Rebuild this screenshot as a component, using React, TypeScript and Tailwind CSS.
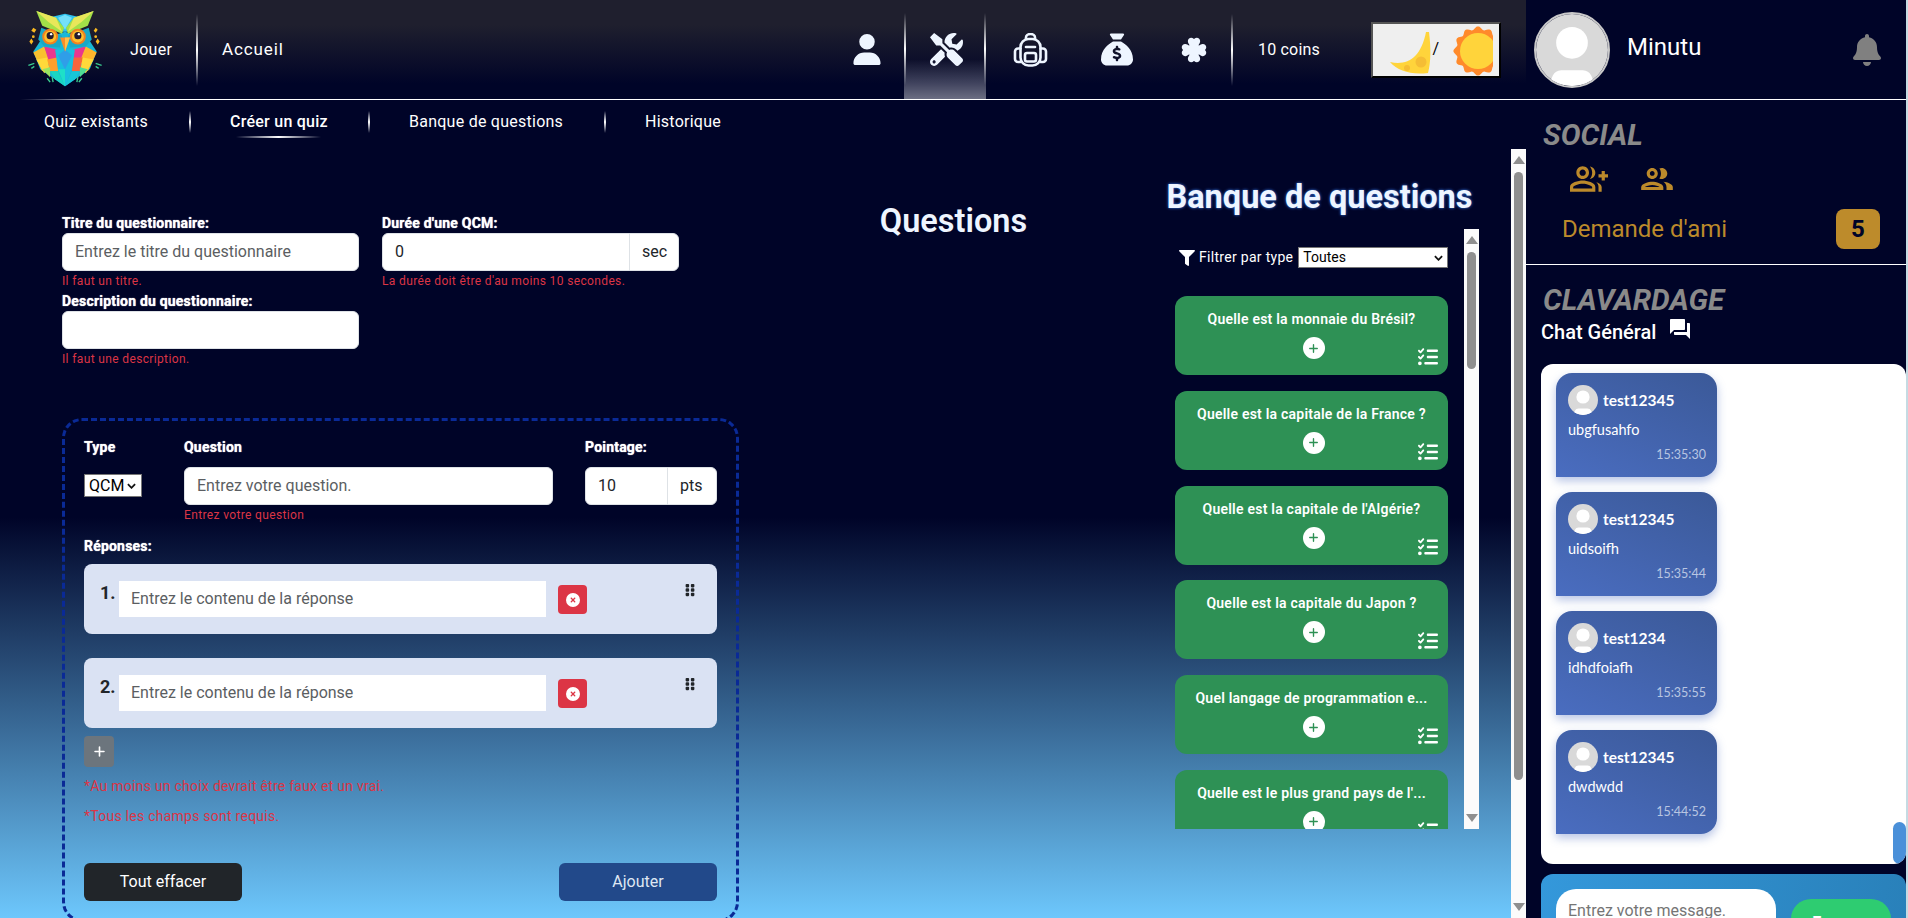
import React from "react";
import { FaTools, FaBell, FaFilter, FaGripVertical } from "react-icons/fa";
import { FaListCheck, FaSackDollar, FaCircleXmark, FaPlus, FaUser, FaClover } from "react-icons/fa6";
import { MdForum, MdOutlineGroupAdd, MdOutlineGroup } from "react-icons/md";

function Owl() {
  return (
    <svg viewBox="0 0 130 100" className="w-[130px] h-[99px] shrink-0">
      <polygon points="41,40 33,52 40,70 65,87 90,70 97,52 89,40 65,32" fill="#18b8d8" />
      <polygon points="33,53 44,47 50,62 42,72" fill="#f9c22e" />
      <polygon points="44,47 57,50 56,60 49,63" fill="#e8378f" />
      <polygon points="36,60 44,74 49,68 47,58" fill="#ffd93a" />
      <polygon points="47,60 57,58 58,72 50,72" fill="#ff9f2b" />
      <polygon points="86,47 73,50 74,60 81,63" fill="#e8378f" />
      <polygon points="97,53 86,47 80,62 88,72" fill="#ffb62c" />
      <polygon points="83,58 73,58 72,72 80,72" fill="#f7643c" />
      <polygon points="94,60 86,74 81,68 83,58" fill="#ffd93a" />
      <polygon points="42,70 50,68 50,78" fill="#9be35f" />
      <polygon points="88,70 80,68 80,78" fill="#4fdc92" />
      <polygon points="50,72 58,72 65,87 55,80" fill="#1ad6c2" />
      <polygon points="80,72 72,72 65,87 75,80" fill="#17c7d8" />
      <polygon points="55,50 75,50 72,70 65,87 58,70" fill="#19bfe0" />
      <polygon points="58,56 65,50 72,56 65,70" fill="#2f9ee8" />
      <polygon points="58,70 65,70 65,87" fill="#1ee0c8" />
      <polygon points="52,17 65,14 78,17 70,32 60,32" fill="#2fc2ee" />
      <polygon points="58,18 65,15 72,18 65,30" fill="#74e0fb" />
      <polygon points="41,28 62,36 60,48 44,47 38,40" fill="#19a8c6" />
      <polygon points="89,28 68,36 70,48 86,47 92,40" fill="#19a8c6" />
      <polygon points="36,11 56,18 64,28 62,34 42,26" fill="#a3e048" />
      <polygon points="36,11 56,18 62,32 48,22" fill="#e8e75a" />
      <polygon points="94,11 74,18 66,28 68,34 88,26" fill="#a3e048" />
      <polygon points="94,11 74,18 68,32 82,22" fill="#e8e75a" />
      <circle cx="50" cy="37" r="8" fill="#f0811f" />
      <circle cx="50" cy="37" r="6" fill="#ffc02c" />
      <circle cx="50" cy="36" r="3.600" fill="#241a2e" />
      <circle cx="51" cy="34.500" r="1.200" fill="#fff" />
      <circle cx="78" cy="37" r="8" fill="#f0811f" />
      <circle cx="78" cy="37" r="6" fill="#ffc02c" />
      <circle cx="78" cy="36" r="3.600" fill="#241a2e" />
      <circle cx="79" cy="34.500" r="1.200" fill="#fff" />
      <polygon points="60,38 70,38 65,52" fill="#f98d2a" />
      <polygon points="65,38 70,38 65,52" fill="#ffc04a" />
      <g fill="#f8b820">
        <polygon points="33,28 36,30 34,33 31,31" />
        <circle cx="33" cy="37" r="1.400" />
        <polygon points="31,39 33,42 31,45 29,42" />
        <polygon points="96,28 98,30 96,33 94,31" />
        <circle cx="96" cy="37" r="1.400" />
        <polygon points="98,39 100,42 98,45 96,42" />
      </g>
      <g stroke="#39c98e" strokeWidth="1.400">
        <path d="M28 66l6-2M31 69l3-2M102 66l-6-2M99 69l-3-2M47 79l3 4M52 78l1 5M82 79l-3 4M78 78l-1 5" />
      </g>
    </svg>
  );
}

function Avatar({ size }: { size: string }) {
  return (
    <svg viewBox="0 0 100 100" className={size}>
      <defs>
        <clipPath id="avc">
          <circle cx="50" cy="50" r="50" />
        </clipPath>
      </defs>
      <g clipPath="url(#avc)">
        <rect width="100" height="100" fill="#d9d9d9" />
        <circle cx="50" cy="40" r="22" fill="#fff" />
        <path d="M20 100c0-10 4-22 15-22h30c11 0 15 12 15 22z" fill="#fff" />
      </g>
    </svg>
  );
}

function Backpack() {
  return (
    <svg viewBox="0 0 35 34" className="w-[35px] h-[34px]" fill="none" stroke="#eef5ff" strokeWidth="2.600" strokeLinecap="round" strokeLinejoin="round">
      <path d="M13 6V4.500a4.500 3.500 0 0 1 9 0V6" />
      <rect x="7.500" y="6" width="20" height="26.500" rx="8" />
      <path d="M7.500 15.500H5a3 3 0 0 0-3 3V26a3 3 0 0 0 3 3h2.500" />
      <path d="M27.500 15.500H30a3 3 0 0 1 3 3V26a3 3 0 0 1-3 3h-2.500" />
      <path d="M13 14h9" />
      <rect x="12" y="20" width="11" height="8.500" rx="2" />
    </svg>
  );
}

function ThemeArt() {
  const pts: string[] = [];
  for (let i = 0; i < 144; i++) {
    const t = (i / 144) * Math.PI * 2;
    const r = 23 + 1.6 * Math.cos(12 * t);
    pts.push(`${(105 + r * Math.cos(t)).toFixed(1)},${(27 + r * Math.sin(t)).toFixed(1)}`);
  }
  return (
    <svg viewBox="0 0 126 52" className="w-[126px] h-[52px]">
      <defs>
        <clipPath id="sunclip">
          <rect x="0" y="0" width="120" height="52" />
        </clipPath>
      </defs>
      <path d="M17 38C34 42 48 34 53 8L56 8C58 24 58 38 55 49C38 51 25 47 17 38z" fill="#ffd43b" />
      <circle cx="48" cy="38" r="5.500" fill="#f5bd35" />
      <circle cx="34" cy="44" r="3" fill="#f5bd35" />
      <text x="59.500" y="30" fontSize="16" fill="#000" fontFamily="Roboto, sans-serif">/</text>
      <g clipPath="url(#sunclip)">
        <polygon points={pts.join(" ")} fill="#ff8a2b" />
        <circle cx="105" cy="27" r="18" fill="#ffd43b" />
      </g>
    </svg>
  );
}

function VSep({ h = "h-[72px]" }: { h?: string }) {
  return <div className={`w-[2px] shrink-0 ${h} bg-[linear-gradient(180deg,transparent,#ffffff_50%,transparent)]`} />;
}

function Scrollbar({ thumb, className }: { thumb: string; className: string }) {
  return (
    <div className={`w-[15px] bg-[#fbfbfb] flex flex-col items-center shrink-0 ${className}`}>
      <svg viewBox="0 0 12 8" className="w-[12px] h-[8px] mt-[7px] shrink-0">
        <polygon points="6,0 12,8 0,8" fill="#8f8f8f" />
      </svg>
      <div className={`w-[9px] ${thumb} mt-[8px] rounded-[5px] bg-[#8f8f8f] shrink-0`} />
      <svg viewBox="0 0 12 8" className="w-[12px] h-[8px] mt-auto mb-[7px] shrink-0">
        <polygon points="0,0 12,0 6,8" fill="#8f8f8f" />
      </svg>
    </div>
  );
}

const label = "block text-white text-[14px] tracking-[0.2px] leading-[19px] font-bold whitespace-nowrap [text-shadow:0_0_1px_#ffffff]";
const control =
  "h-[38px] bg-white border border-[#dee2e6] text-[16px] flex items-center px-[12px] whitespace-nowrap";
const value = "text-[#212529]";
const ph = "text-[#5b5e62]";
const err = "text-[#dc3545] text-[12px] tracking-[0.36px] leading-[20px] h-[20px] whitespace-nowrap";

function Answer({ n, mt }: { n: number; mt: string }) {
  return (
    <div className={`flex items-start w-[633px] h-[70px] rounded-[8px] bg-[#dae2f3] ${mt}`}>
      <span className="w-[35px] pl-[16px] mt-[18px] text-[18px] leading-[22px] font-bold text-[#212529]">{n}.</span>
      <div className="w-[427px] h-[36px] mt-[17px] bg-white flex items-center pl-[12px] text-[16px] text-[#5b5e62] whitespace-nowrap">
        Entrez le contenu de la réponse
      </div>
      <div className="ml-[12px] mt-[21px] w-[29px] h-[29px] rounded-[4px] bg-[#dc3545] flex items-center justify-center">
        <FaCircleXmark className="w-[14px] h-[14px] text-white" />
      </div>
      <FaGripVertical className="ml-auto mr-[20px] mt-[19px] w-[14px] h-[14px] text-[#212529]" />
    </div>
  );
}

function QCard({ text }: { text: string }) {
  return (
    <div className="relative h-[79px] w-[273px] shrink-0 rounded-[12px] bg-[#2e9155] mb-[15.750px] flex flex-col items-center pt-[13px]">
      <div className="w-[240px] text-center text-white text-[14px] tracking-[0.23px] leading-[20px] font-semibold whitespace-nowrap">{text}</div>
      <div className="mt-[8px] w-[22px] h-[22px] ml-[4px] rounded-full bg-white flex items-center justify-center">
        <FaPlus className="w-[11px] h-[11px] text-[#2e9155]" />
      </div>
      <FaListCheck className="absolute right-[9px] bottom-[8px] w-[22px] h-[20px] text-white" />
    </div>
  );
}

function Msg({ name, text, time }: { name: string; text: string; time: string }) {
  return (
    <div className="w-[161px] h-[104px] shrink-0 mb-[15px] rounded-[16px] rounded-bl-none bg-[linear-gradient(25deg,#4a6dc0,#3b5998)] shadow-[0_4px_10px_rgba(74,108,191,0.4)] pl-[12px] pr-[11px] pt-[12px] font-['Lato',sans-serif] text-white">
      <div className="flex items-center h-[30px]">
        <Avatar size="w-[30px] h-[30px]" />
        <span className="ml-[5px] mt-[2px] text-[15.500px] font-bold">{name}</span>
      </div>
      <div className="mt-[5px] text-[14.500px] leading-[20px]">{text}</div>
      <div className="mt-[8px] text-right text-[12.500px] leading-[14px] text-[#b9c6e2]">{time}</div>
    </div>
  );
}

export default function App() {
  const cards = [
    "Quelle est la monnaie du Brésil?",
    "Quelle est la capitale de la France ?",
    "Quelle est la capitale de l'Algérie?",
    "Quelle est la capitale du Japon ?",
    "Quel langage de programmation e...",
    "Quelle est le plus grand pays de l'...",
  ];
  return (
    <div className="w-[1908px] h-[918px] overflow-hidden flex bg-[#000428] font-['Roboto',sans-serif]">
      <div className="w-[1906px] h-[918px] flex flex-col">
        {/* top bar */}
        <header className="h-[100px] shrink-0 flex relative">
          <div className="w-[1526px] h-[99px] flex items-center bg-[linear-gradient(180deg,#1f1f2e_0%,#1f1f2e_25%,#000428_85%)] text-white">
            <Owl />
            <span className="text-[16px] tracking-[0.3px] w-[66px]">Jouer</span>
            <VSep />
            <span className="ml-[24px] text-[17px] tracking-[0.9px]">Accueil</span>
            <div className="ml-auto flex items-center h-full">
              <div className="w-[58px] flex justify-center">
                <FaUser className="w-[28px] h-[31px] text-[#eef5ff] ml-[3px]" />
              </div>
              <div className="relative w-[82px] h-full flex items-center justify-center ml-[9px] bg-[linear-gradient(180deg,transparent_60%,rgba(255,255,255,0.42)_100%)]">
                <div className="absolute left-0 top-[13px]"><VSep /></div>
                <div className="absolute right-0 top-[13px]"><VSep /></div>
                <FaTools className="w-[33px] h-[33px] text-[#eef5ff] ml-[3px]" />
              </div>
              <div className="w-[46px] flex justify-center ml-[22px]">
                <Backpack />
              </div>
              <div className="w-[46px] flex justify-center ml-[40px]">
                <FaSackDollar className="w-[32px] h-[33px] text-[#eef5ff]" />
              </div>
              <div className="w-[46px] flex justify-center ml-[31px]">
                <FaClover className="w-[28px] h-[28px] text-[#eef5ff]" />
              </div>
              <div className="ml-[14px]"><VSep /></div>
              <span className="ml-[25px] text-[16px] tracking-[0.2px] whitespace-nowrap">10 coins</span>
              <div className="ml-[51px] mr-[25px] w-[130px] h-[56px] bg-[#efefef] border-2 border-t-[#555] border-l-[#555] border-r-black border-b-black overflow-hidden flex items-center">
                <ThemeArt />
              </div>
            </div>
          </div>
          <div className="flex-1 h-[99px] flex items-center text-white pl-[8px]">
            <div className="rounded-full border-2 border-[#c9c9c9]">
              <Avatar size="w-[72px] h-[72px] block" />
            </div>
            <span className="ml-[17px] -mt-[6px] text-[24px]">Minutu</span>
            <FaBell className="ml-auto mr-[24px] w-[30px] h-[32px] text-[#808080]" />
          </div>
          <div className="absolute left-[20px] right-0 bottom-0 h-[1.500px] bg-[linear-gradient(90deg,transparent,#ffffff_5%)]" />
        </header>

        <div className="flex-1 flex min-h-0">
          {/* main */}
          <main className="w-[1526px] shrink-0 flex flex-col min-h-0 bg-[linear-gradient(180deg,#000428_51%,#6dc7fc_100%)]">
            <nav className="h-[49px] shrink-0 flex items-center pl-[44px] text-white text-[16px] tracking-[0.25px] pb-[5px]">
              <span className="w-[103px] whitespace-nowrap">Quiz existants</span>
              <div className="ml-[42px]"><VSep h="h-[22px]" /></div>
              <span className="relative ml-[39px] w-[97px] font-medium whitespace-nowrap">
                Créer un quiz
                <span className="absolute left-[6px] w-[85px] top-[26px] h-[2px] bg-[linear-gradient(90deg,transparent,#ffffff_50%,transparent)]" />
              </span>
              <div className="ml-[41px]"><VSep h="h-[22px]" /></div>
              <span className="ml-[39px] w-[154px] whitespace-nowrap">Banque de questions</span>
              <div className="ml-[41px]"><VSep h="h-[22px]" /></div>
              <span className="ml-[39px] whitespace-nowrap">Historique</span>
            </nav>
            <div className="flex-1 flex min-h-0">
              <div className="ml-[62px] w-[677px] pt-[65px] shrink-0">
                <div className="flex gap-x-[23px]">
                  <div className="w-[297px]">
                    <label className={label}>Titre du questionnaire:</label>
                    <div className={`${control} rounded-[6px] ${ph}`}>Entrez le titre du questionnaire</div>
                    <div className={err}>Il faut un titre.</div>
                    <label className={`${label} mt-[1px]`}>Description du questionnaire:</label>
                    <div className={`${control} rounded-[6px]`} />
                    <div className={err}>Il faut une description.</div>
                  </div>
                  <div className="w-[297px]">
                    <label className={label}>Durée d'une QCM:</label>
                    <div className="flex">
                      <div className={`${control} ${value} flex-1 rounded-l-[6px]`}>0</div>
                      <div className={`${control} ${value} w-[50px] -ml-px rounded-r-[6px] bg-[#f8f9fa]`}>sec</div>
                    </div>
                    <div className={err}>La durée doit être d'au moins 10 secondes.</div>
                  </div>
                </div>
                <section className="mt-[49px] w-[677px] h-[504px] border-[3px] border-dashed border-[#0a2a96] rounded-[20px] pl-[19px] pt-[17px]">
                  <div className="flex">
                    <div className="w-[100px]">
                      <label className={label}>Type</label>
                      <div className="mt-[17px] w-[58px] h-[23px] bg-white border border-[#767676] flex items-center pl-[4px] text-[16px] text-black">
                        QCM
                        <svg viewBox="0 0 10 6" className="w-[9px] h-[6px] ml-[3px]"><path d="M1 1l4 4 4-4" fill="none" stroke="#111" strokeWidth="2" /></svg>
                      </div>
                    </div>
                    <div className="w-[369px]">
                      <label className={label}>Question</label>
                      <div className={`${control} mt-[10px] rounded-[6px] ${ph}`}>Entrez votre question.</div>
                      <div className={err}>Entrez votre question</div>
                    </div>
                    <div className="ml-[32px] w-[132px]">
                      <label className={label}>Pointage:</label>
                      <div className="flex mt-[10px]">
                        <div className={`${control} ${value} flex-1 rounded-l-[6px]`}>10</div>
                        <div className={`${control} ${value} w-[50px] -ml-px rounded-r-[6px] bg-[#f8f9fa]`}>pts</div>
                      </div>
                    </div>
                  </div>
                  <label className={`${label} mt-[12px]`}>Réponses:</label>
                  <Answer n={1} mt="mt-[8px]" />
                  <Answer n={2} mt="mt-[24px]" />
                  <div className="mt-[8px] w-[30px] h-[31px] rounded-[4px] bg-[#6c757d] flex items-center justify-center">
                    <FaPlus className="w-[13px] h-[13px] text-white" />
                  </div>
                  <p className="mt-[9px] text-[14px] tracking-[0.25px] leading-[20px] text-[#dc3545]">*Au moins un choix devrait être faux et un vrai.</p>
                  <p className="mt-[10px] text-[14px] tracking-[0.25px] leading-[20px] text-[#dc3545]">*Tous les champs sont requis.</p>
                  <div className="mt-[37px] w-[633px] flex justify-between">
                    <div className="w-[158px] h-[38px] rounded-[6px] bg-[#212529] text-white text-[16px] flex items-center justify-center">Tout effacer</div>
                    <div className="w-[158px] h-[38px] rounded-[6px] bg-[#22498a] text-[#dfe7f3] text-[16px] flex items-center justify-center">Ajouter</div>
                  </div>
                </section>
              </div>
              <div className="w-[429px] shrink-0 pt-[53px] text-center">
                <h2 className="text-[32.500px] leading-[38px] font-semibold text-[#eef5ff]">Questions</h2>
              </div>
              <div className="w-[311px] shrink-0 pt-[29px]">
                <h2 className="w-[303px] flex justify-center whitespace-nowrap text-[32.500px] leading-[38px] font-bold text-[#eef5ff] [text-shadow:0_0_3px_#3b82f6]">
                  Banque de questions
                </h2>
                <div className="mt-[13px] h-[600px] flex overflow-hidden">
                  <div className="w-[296px] pl-[7px] pr-[16px] shrink-0">
                    <div className="h-[21px] mt-[18px] flex items-center">
                      <FaFilter className="ml-[4px] w-[16px] h-[16px] text-white" />
                      <span className="ml-[4px] text-[14px] tracking-[0.3px] text-white whitespace-nowrap">Filtrer par type</span>
                      <div className="ml-[5px] w-[150px] h-[21px] bg-white border border-[#767676] flex items-center pl-[4px] text-[14px] text-black">
                        Toutes
                        <svg viewBox="0 0 10 6" className="w-[9px] h-[6px] ml-auto mr-[4px]"><path d="M1 1l4 4 4-4" fill="none" stroke="#111" strokeWidth="2" /></svg>
                      </div>
                    </div>
                    <div className="mt-[28px]">
                      {cards.map((c) => (
                        <QCard key={c} text={c} />
                      ))}
                    </div>
                  </div>
                  <Scrollbar thumb="h-[117px]" className="h-[600px]" />
                </div>
              </div>
              <div className="ml-auto h-full">
                <Scrollbar thumb="h-[608px]" className="h-full" />
              </div>
            </div>
          </main>

          {/* aside */}
          <aside className="flex-1 min-w-0 flex flex-col overflow-hidden">
            <div className="h-[165px] shrink-0 border-b-[1.500px] border-white pt-[18px]">
              <h3 className="ml-[17px] text-[29.600px] leading-[34px] font-bold italic text-[#8a8a8a]">SOCIAL</h3>
              <div className="mt-[8px] ml-[44px] flex items-center text-[#bc8a2b]">
                <MdOutlineGroupAdd className="w-[38px] h-[38px]" />
                <MdOutlineGroup className="ml-[30px] w-[38px] h-[38px]" />
              </div>
              <div className="mt-[11px] flex items-center h-[40px]">
                <span className="ml-[36px] text-[24px] text-[#bc8a2b]">Demande d'ami</span>
                <span className="ml-auto mr-[26px] w-[44px] h-[40px] rounded-[8px] bg-[#bd8b2b] flex items-center justify-center text-[24px] font-bold text-[#000428]">5</span>
              </div>
            </div>
            <h3 className="ml-[17px] mt-[18px] text-[29.600px] leading-[34px] font-bold italic text-[#8a8a8a]">CLAVARDAGE</h3>
            <div className="ml-[15px] mt-[3px] h-[24px] flex items-center text-white">
              <span className="text-[20px] font-medium">Chat Général</span>
              <MdForum className="ml-[12px] -mt-[6px] w-[24px] h-[24px]" />
            </div>
            <div className="relative ml-[15px] mt-[20px] w-[365px] h-[500px] shrink-0 bg-white rounded-[12px] overflow-hidden pl-[15px] pt-[9px]">
              <Msg name="test12345" text="ubgfusahfo" time="15:35:30" />
              <Msg name="test12345" text="uidsoifh" time="15:35:44" />
              <Msg name="test1234" text="idhdfoiafh" time="15:35:55" />
              <Msg name="test12345" text="dwdwdd" time="15:44:52" />
              <div className="absolute right-0 bottom-0 w-[13px] h-[42px] rounded-[7px] bg-[#4a90d9]" />
            </div>
            <div className="ml-[15px] mt-[10px] w-[365px] h-[80px] shrink-0 rounded-t-[12px] bg-[linear-gradient(100deg,#3498db,#2980b9)] flex items-start overflow-hidden">
              <div className="ml-[15px] mt-[15px] w-[220px] h-[50px] rounded-[20px] bg-white pl-[12px] pt-[10px] text-[16px] leading-[24px] text-[#757575] whitespace-nowrap">
                Entrez votre message.
              </div>
              <div className="ml-[15px] mt-[25px] w-[100px] h-[45px] rounded-[20px] bg-[#2ecc71] text-white text-[16px] font-bold text-center pt-[12px]">
                Envoyer
              </div>
            </div>
          </aside>
        </div>
      </div>
      <div className="w-[2px] h-full bg-[#c5dbe3]" />
    </div>
  );
}
